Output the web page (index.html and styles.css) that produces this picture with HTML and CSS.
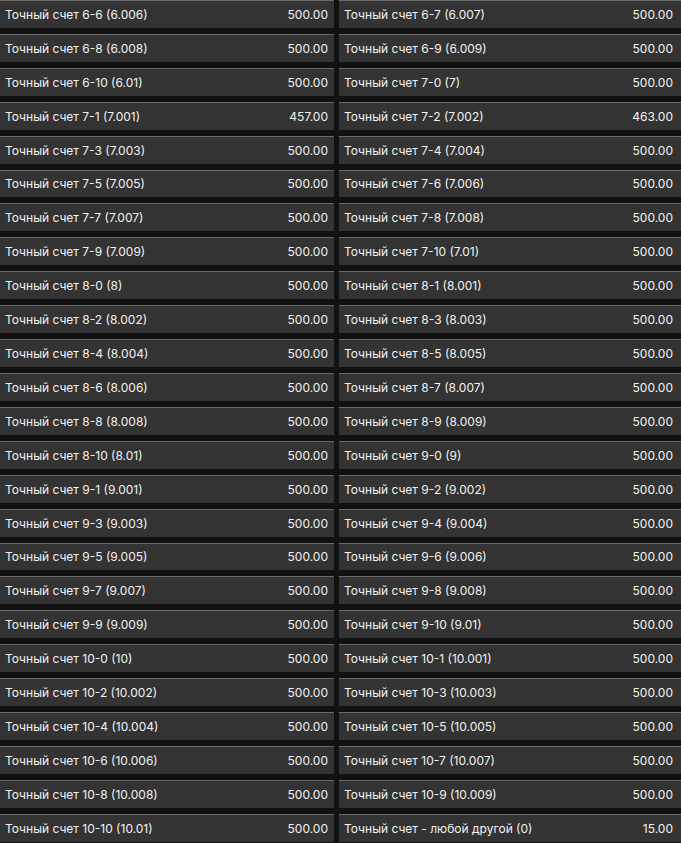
FILE: index.html
```html
<!DOCTYPE html>
<html>
<head>
<meta charset="utf-8">
<link rel="stylesheet" href="styles.css">
</head>
<body>
<div class="grid">
<div class="cell"><span>Точный счет 6-6 (6.006)</span><span>500.00</span></div>
<div class="cell"><span>Точный счет 6-7 (6.007)</span><span>500.00</span></div>
<div class="cell"><span>Точный счет 6-8 (6.008)</span><span>500.00</span></div>
<div class="cell"><span>Точный счет 6-9 (6.009)</span><span>500.00</span></div>
<div class="cell"><span>Точный счет 6-10 (6.01)</span><span>500.00</span></div>
<div class="cell"><span>Точный счет 7-0 (7)</span><span>500.00</span></div>
<div class="cell"><span>Точный счет 7-1 (7.001)</span><span>457.00</span></div>
<div class="cell"><span>Точный счет 7-2 (7.002)</span><span>463.00</span></div>
<div class="cell"><span>Точный счет 7-3 (7.003)</span><span>500.00</span></div>
<div class="cell"><span>Точный счет 7-4 (7.004)</span><span>500.00</span></div>
<div class="cell"><span>Точный счет 7-5 (7.005)</span><span>500.00</span></div>
<div class="cell"><span>Точный счет 7-6 (7.006)</span><span>500.00</span></div>
<div class="cell"><span>Точный счет 7-7 (7.007)</span><span>500.00</span></div>
<div class="cell"><span>Точный счет 7-8 (7.008)</span><span>500.00</span></div>
<div class="cell"><span>Точный счет 7-9 (7.009)</span><span>500.00</span></div>
<div class="cell"><span>Точный счет 7-10 (7.01)</span><span>500.00</span></div>
<div class="cell"><span>Точный счет 8-0 (8)</span><span>500.00</span></div>
<div class="cell"><span>Точный счет 8-1 (8.001)</span><span>500.00</span></div>
<div class="cell"><span>Точный счет 8-2 (8.002)</span><span>500.00</span></div>
<div class="cell"><span>Точный счет 8-3 (8.003)</span><span>500.00</span></div>
<div class="cell"><span>Точный счет 8-4 (8.004)</span><span>500.00</span></div>
<div class="cell"><span>Точный счет 8-5 (8.005)</span><span>500.00</span></div>
<div class="cell"><span>Точный счет 8-6 (8.006)</span><span>500.00</span></div>
<div class="cell"><span>Точный счет 8-7 (8.007)</span><span>500.00</span></div>
<div class="cell"><span>Точный счет 8-8 (8.008)</span><span>500.00</span></div>
<div class="cell"><span>Точный счет 8-9 (8.009)</span><span>500.00</span></div>
<div class="cell"><span>Точный счет 8-10 (8.01)</span><span>500.00</span></div>
<div class="cell"><span>Точный счет 9-0 (9)</span><span>500.00</span></div>
<div class="cell"><span>Точный счет 9-1 (9.001)</span><span>500.00</span></div>
<div class="cell"><span>Точный счет 9-2 (9.002)</span><span>500.00</span></div>
<div class="cell"><span>Точный счет 9-3 (9.003)</span><span>500.00</span></div>
<div class="cell"><span>Точный счет 9-4 (9.004)</span><span>500.00</span></div>
<div class="cell"><span>Точный счет 9-5 (9.005)</span><span>500.00</span></div>
<div class="cell"><span>Точный счет 9-6 (9.006)</span><span>500.00</span></div>
<div class="cell"><span>Точный счет 9-7 (9.007)</span><span>500.00</span></div>
<div class="cell"><span>Точный счет 9-8 (9.008)</span><span>500.00</span></div>
<div class="cell"><span>Точный счет 9-9 (9.009)</span><span>500.00</span></div>
<div class="cell"><span>Точный счет 9-10 (9.01)</span><span>500.00</span></div>
<div class="cell"><span>Точный счет 10-0 (10)</span><span>500.00</span></div>
<div class="cell"><span>Точный счет 10-1 (10.001)</span><span>500.00</span></div>
<div class="cell"><span>Точный счет 10-2 (10.002)</span><span>500.00</span></div>
<div class="cell"><span>Точный счет 10-3 (10.003)</span><span>500.00</span></div>
<div class="cell"><span>Точный счет 10-4 (10.004)</span><span>500.00</span></div>
<div class="cell"><span>Точный счет 10-5 (10.005)</span><span>500.00</span></div>
<div class="cell"><span>Точный счет 10-6 (10.006)</span><span>500.00</span></div>
<div class="cell"><span>Точный счет 10-7 (10.007)</span><span>500.00</span></div>
<div class="cell"><span>Точный счет 10-8 (10.008)</span><span>500.00</span></div>
<div class="cell"><span>Точный счет 10-9 (10.009)</span><span>500.00</span></div>
<div class="cell"><span>Точный счет 10-10 (10.01)</span><span>500.00</span></div>
<div class="cell"><span>Точный счет - любой другой (0)</span><span>15.00</span></div>
</div>
</body>
</html>
```
FILE: styles.css
```css
html, body {
  margin: 0;
  padding: 0;
  background: #111111;
}
body {
  font-family: Inter, "Noto Sans", sans-serif;
  font-size: 12px;
  color: #f2f2f2;
  overflow: hidden;
}
.grid {
  display: grid;
  grid-template-columns: 334px 342px;
  column-gap: 5px;
  row-gap: 6px;
}
.cell {
  display: flex;
  justify-content: space-between;
  align-items: center;
  height: 26.92px;
  border-top: 1px solid #6a6a6a;
  background: #333333;
  padding: 0 6px 0 5px;
  box-sizing: content-box;
}
.cell:nth-child(even) {
  padding-right: 8px;
}
```
